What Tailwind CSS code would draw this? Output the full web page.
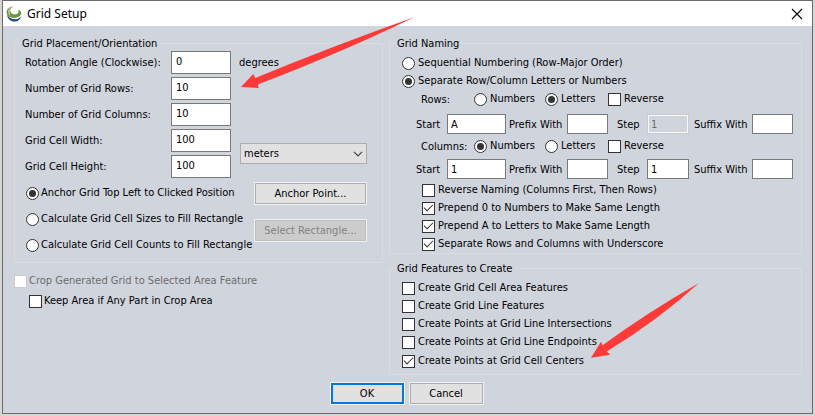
<!doctype html>
<html lang="en">
<head>
    <meta charset="UTF-8">
    <meta name="viewport" content="width=device-width, initial-scale=1.0">
    <script src="https://cdn.jsdelivr.net/npm/@tailwindcss/browser@4"></script>
    <title>Grid Setup</title>
</head>
<body class="bg-[#d6d6d2] font-['DejaVu_Sans_Condensed','DejaVu_Sans',sans-serif] text-[11px] leading-[14px] text-black">
<div class="flex flex-col min-h-screen pl-[2px] pr-[2px] pb-[2px]">
    <main class="relative grow flex flex-col border border-[#6b6b6b] bg-[#d0d4dd]">
        <header class="flex items-center justify-between h-[25px] bg-white pl-[3px] pr-[9px]">
            <div class="flex items-center gap-[5px]">
                <svg class="w-4 h-4" viewBox="0 0 16 16" aria-hidden="true">
                    <path d="M1 8.500C1.500 13 5 15.500 8.500 15.500c3.500 0 6-2 7-5.500-2 2.800-4.500 3.600-7.500 3.300C4.800 13 2.500 11 1 8.500z" fill="#17466b"/>
                    <path d="M7 .5C3 .8.500 3.500.600 6.500.800 10 4 11.900 8 11.900c3.500 0 6.500-1.500 7.200-4.100.5-2-.9-3.600-3.200-4.100 1.200 1.700.8 3.400-1.200 4.300C8 9 4.800 8 4.300 5.300 4 3.300 5.200 1.500 7 .5z" fill="#6f9440"/>
                    <path d="M7 .5C3.500 1.300 1.600 3.800 2 6.500c.4 2.100 2 3.500 4.200 4.100C4 9 3.400 7.300 3.700 5.200 4 3.300 5.200 1.500 7 .5z" fill="#b3c795"/>
                </svg>
                <h1 class="font-['Noto_Sans',sans-serif] text-[12px]">Grid Setup</h1>
            </div>
            <button type="button" aria-label="Close" class="flex">
                <svg class="w-3 h-3" viewBox="0 0 12 12" fill="none" stroke="#000" stroke-width="1.100">
                    <path d="M1 1l10 10M11 1L1 11"/>
                </svg>
            </button>
        </header>

        <div class="grid grid-cols-[369fr_413fr] gap-x-[6px] items-start pt-[10px] pl-[11px] pr-[10px]">
            <!-- left side -->
            <div class="flex flex-col">
                <fieldset class="border border-[#dcdcdc] pb-[4px]">
                    <legend class="ml-[5px] px-[2px] pt-px">Grid Placement/Orientation</legend>
                    <div class="grid grid-cols-[146px_60px_1fr] auto-rows-[23px] gap-y-[3px] items-center pl-[10px] pr-[15px]">
                        <label for="angle" class="pt-px">Rotation Angle (Clockwise):</label>
                        <input id="angle" type="text" value="0" class="h-[23px] w-full border border-[#7a7a7a] bg-white pl-1 pb-[2px]">
                        <span class="pl-2 pt-px">degrees</span>
                        <label for="grid-rows" class="pt-px">Number of Grid Rows:</label>
                        <input id="grid-rows" type="text" value="10" class="h-[23px] w-full border border-[#7a7a7a] bg-white pl-1 pb-[2px]">
                        <span></span>
                        <label for="grid-columns" class="pt-px">Number of Grid Columns:</label>
                        <input id="grid-columns" type="text" value="10" class="h-[23px] w-full border border-[#7a7a7a] bg-white pl-1 pb-[2px]">
                        <span></span>
                        <label for="cell-width" class="pt-px">Grid Cell Width:</label>
                        <input id="cell-width" type="text" value="100" class="h-[23px] w-full border border-[#7a7a7a] bg-white pl-1 pb-[2px]">
                        <div class="row-span-2 relative ml-[9px] flex items-center">
                            <select aria-label="Units" class="appearance-none h-[21px] w-full border border-[#adadad] bg-[#e1e1e1] pl-[3px]">
                                <option>meters</option>
                                <option>feet</option>
                            </select>
                            <svg class="absolute right-1 w-[10px] h-[6px] pointer-events-none" viewBox="0 0 10 6" fill="none" stroke="#444" stroke-width="1.200">
                                <path d="M1 .8l4 4 4-4"/>
                            </svg>
                        </div>
                        <label for="cell-height" class="pt-px">Grid Cell Height:</label>
                        <input id="cell-height" type="text" value="100" class="h-[23px] w-full border border-[#7a7a7a] bg-white pl-1 pb-[2px]">
                    </div>
                    <div class="flex justify-between items-start pt-[2px] pl-[11px] pr-[15px]">
                        <div class="flex flex-col">
                            <label class="flex items-center gap-[2px] h-[26px]">
                                <input type="radio" name="mode" checked class="appearance-none shrink-0 grid place-items-center size-[13px] rounded-full border border-[#333] bg-white checked:before:size-[7px] checked:before:rounded-full checked:before:bg-[#333]">
                                Anchor Grid Top Left to Clicked Position
                            </label>
                            <label class="flex items-center gap-[2px] h-[26px]">
                                <input type="radio" name="mode" class="appearance-none shrink-0 grid place-items-center size-[13px] rounded-full border border-[#333] bg-white checked:before:size-[7px] checked:before:rounded-full checked:before:bg-[#333]">
                                Calculate Grid Cell Sizes to Fill Rectangle
                            </label>
                            <label class="flex items-center gap-[2px] h-[26px]">
                                <input type="radio" name="mode" class="appearance-none shrink-0 grid place-items-center size-[13px] rounded-full border border-[#333] bg-white checked:before:size-[7px] checked:before:rounded-full checked:before:bg-[#333]">
                                Calculate Grid Cell Counts to Fill Rectangle
                            </label>
                        </div>
                        <div class="flex flex-col gap-[14px] pt-[2px]">
                            <button type="button" class="h-[23px] w-[113px] border border-[#f2f2f2] bg-[#e1e1e1] outline -outline-offset-2 outline-[#adadad]">Anchor Point...</button>
                            <button type="button" disabled class="h-[23px] w-[113px] border border-[#f2f2f2] bg-[#cccccc] text-[#838383] outline -outline-offset-2 outline-[#bfbfbf]">Select Rectangle...</button>
                        </div>
                    </div>
                </fieldset>
                <div class="flex flex-col pt-[8px]">
                    <label class="flex items-center gap-[2px] h-[20px] text-[#6d6d6d]">
                        <input type="checkbox" disabled class="appearance-none shrink-0 size-[13px] border border-[#cccccc] bg-white">
                        Crop Generated Grid to Selected Area Feature
                    </label>
                    <label class="flex items-center gap-[2px] h-[20px] pl-[15px]">
                        <input type="checkbox" class="appearance-none shrink-0 grid place-items-center size-[13px] border border-[#333] bg-white checked:before:w-[9px] checked:before:h-[5px] checked:before:mb-[3px] checked:before:border-l checked:before:border-b checked:before:border-[#333] checked:before:-rotate-45">
                        Keep Area if Any Part in Crop Area
                    </label>
                </div>
            </div>

            <!-- right side -->
            <div class="flex flex-col">
                <fieldset class="border border-[#dcdcdc]">
                    <legend class="ml-[5px] px-[2px] pt-px">Grid Naming</legend>
                    <div class="flex flex-col pt-[3px] pl-[12px] pr-[8px]">
                        <label class="flex items-center gap-[3px] h-[18px]">
                            <input type="radio" name="naming" class="appearance-none shrink-0 grid place-items-center size-[13px] rounded-full border border-[#333] bg-white checked:before:size-[7px] checked:before:rounded-full checked:before:bg-[#333]">
                            Sequential Numbering (Row-Major Order)
                        </label>
                        <label class="flex items-center gap-[3px] h-[18px]">
                            <input type="radio" name="naming" checked class="appearance-none shrink-0 grid place-items-center size-[13px] rounded-full border border-[#333] bg-white checked:before:size-[7px] checked:before:rounded-full checked:before:bg-[#333]">
                            Separate Row/Column Letters or Numbers
                        </label>
                        <div class="grid grid-cols-[53px_71px_63px_1fr] items-center h-[18px] pl-[19px]">
                            <span class="pt-px">Rows:</span>
                            <label class="flex items-center gap-[3px]">
                                <input type="radio" name="rows" class="appearance-none shrink-0 grid place-items-center size-[13px] rounded-full border border-[#333] bg-white checked:before:size-[7px] checked:before:rounded-full checked:before:bg-[#333]">
                                Numbers
                            </label>
                            <label class="flex items-center gap-[3px]">
                                <input type="radio" name="rows" checked class="appearance-none shrink-0 grid place-items-center size-[13px] rounded-full border border-[#333] bg-white checked:before:size-[7px] checked:before:rounded-full checked:before:bg-[#333]">
                                Letters
                            </label>
                            <label class="flex items-center gap-[3px]">
                                <input type="checkbox" class="appearance-none shrink-0 grid place-items-center size-[13px] border border-[#333] bg-white checked:before:w-[9px] checked:before:h-[5px] checked:before:mb-[3px] checked:before:border-l checked:before:border-b checked:before:border-[#333] checked:before:-rotate-45">
                                Reverse
                            </label>
                        </div>
                        <div class="grid grid-cols-[31px_62px_58px_50px_30px_47px_58px_41px] items-center pt-[6px] pl-[14px] whitespace-nowrap">
                            <label for="row-start" class="pt-px">Start</label>
                            <input id="row-start" type="text" value="A" class="h-[20px] w-[59px] border border-[#7a7a7a] bg-white pl-[3px]">
                            <label for="row-prefix" class="pt-px">Prefix With</label>
                            <input id="row-prefix" type="text" class="h-[20px] w-[41px] border border-[#7a7a7a] bg-white pl-[3px]">
                            <label for="row-step" class="pt-px">Step</label>
                            <input id="row-step" type="text" value="1" disabled class="h-[20px] w-[42px] border-2 border-[#f8f8f8] bg-[#d0d4dd] text-[#6d6d6d] pl-[2px] outline -outline-offset-1 outline-[#cccccc]">
                            <label for="row-suffix" class="pt-px">Suffix With</label>
                            <input id="row-suffix" type="text" class="h-[20px] w-[41px] border border-[#7a7a7a] bg-white pl-[3px]">
                        </div>
                        <div class="grid grid-cols-[53px_71px_63px_1fr] items-center h-[18px] mt-[3px] pl-[19px]">
                            <span class="pt-px">Columns:</span>
                            <label class="flex items-center gap-[3px]">
                                <input type="radio" name="columns" checked class="appearance-none shrink-0 grid place-items-center size-[13px] rounded-full border border-[#333] bg-white checked:before:size-[7px] checked:before:rounded-full checked:before:bg-[#333]">
                                Numbers
                            </label>
                            <label class="flex items-center gap-[3px]">
                                <input type="radio" name="columns" class="appearance-none shrink-0 grid place-items-center size-[13px] rounded-full border border-[#333] bg-white checked:before:size-[7px] checked:before:rounded-full checked:before:bg-[#333]">
                                Letters
                            </label>
                            <label class="flex items-center gap-[3px]">
                                <input type="checkbox" class="appearance-none shrink-0 grid place-items-center size-[13px] border border-[#333] bg-white checked:before:w-[9px] checked:before:h-[5px] checked:before:mb-[3px] checked:before:border-l checked:before:border-b checked:before:border-[#333] checked:before:-rotate-45">
                                Reverse
                            </label>
                        </div>
                        <div class="grid grid-cols-[31px_62px_58px_50px_30px_47px_58px_41px] items-center pt-[4px] pl-[14px] whitespace-nowrap">
                            <label for="column-start" class="pt-px">Start</label>
                            <input id="column-start" type="text" value="1" class="h-[20px] w-[59px] border border-[#7a7a7a] bg-white pl-[3px]">
                            <label for="column-prefix" class="pt-px">Prefix With</label>
                            <input id="column-prefix" type="text" class="h-[20px] w-[41px] border border-[#7a7a7a] bg-white pl-[3px]">
                            <label for="column-step" class="pt-px">Step</label>
                            <input id="column-step" type="text" value="1" class="h-[20px] w-[42px] border border-[#7a7a7a] bg-white pl-[3px]">
                            <label for="column-suffix" class="pt-px">Suffix With</label>
                            <input id="column-suffix" type="text" class="h-[20px] w-[41px] border border-[#7a7a7a] bg-white pl-[3px]">
                        </div>
                        <div class="flex flex-col pt-[2px] pl-[20px]">
                            <label class="flex items-center gap-[3px] h-[18px]">
                                <input type="checkbox" class="appearance-none shrink-0 grid place-items-center size-[13px] border border-[#333] bg-white checked:before:w-[9px] checked:before:h-[5px] checked:before:mb-[3px] checked:before:border-l checked:before:border-b checked:before:border-[#333] checked:before:-rotate-45">
                                Reverse Naming (Columns First, Then Rows)
                            </label>
                            <label class="flex items-center gap-[3px] h-[18px]">
                                <input type="checkbox" checked class="appearance-none shrink-0 grid place-items-center size-[13px] border border-[#333] bg-white checked:before:w-[9px] checked:before:h-[5px] checked:before:mb-[3px] checked:before:border-l checked:before:border-b checked:before:border-[#333] checked:before:-rotate-45">
                                Prepend 0 to Numbers to Make Same Length
                            </label>
                            <label class="flex items-center gap-[3px] h-[18px]">
                                <input type="checkbox" checked class="appearance-none shrink-0 grid place-items-center size-[13px] border border-[#333] bg-white checked:before:w-[9px] checked:before:h-[5px] checked:before:mb-[3px] checked:before:border-l checked:before:border-b checked:before:border-[#333] checked:before:-rotate-45">
                                Prepend A to Letters to Make Same Length
                            </label>
                            <label class="flex items-center gap-[3px] h-[18px]">
                                <input type="checkbox" checked class="appearance-none shrink-0 grid place-items-center size-[13px] border border-[#333] bg-white checked:before:w-[9px] checked:before:h-[5px] checked:before:mb-[3px] checked:before:border-l checked:before:border-b checked:before:border-[#333] checked:before:-rotate-45">
                                Separate Rows and Columns with Underscore
                            </label>
                        </div>
                    </div>
                </fieldset>
                <fieldset class="border border-[#dcdcdc] mt-[7px] pb-[3px]">
                    <legend class="ml-[5px] px-[2px] pt-px">Grid Features to Create</legend>
                    <div class="flex flex-col pt-[3px] pl-[12px]">
                        <label class="flex items-center gap-[3px] h-[18px]">
                            <input type="checkbox" class="appearance-none shrink-0 grid place-items-center size-[13px] border border-[#333] bg-white checked:before:w-[9px] checked:before:h-[5px] checked:before:mb-[3px] checked:before:border-l checked:before:border-b checked:before:border-[#333] checked:before:-rotate-45">
                            Create Grid Cell Area Features
                        </label>
                        <label class="flex items-center gap-[3px] h-[18px]">
                            <input type="checkbox" class="appearance-none shrink-0 grid place-items-center size-[13px] border border-[#333] bg-white checked:before:w-[9px] checked:before:h-[5px] checked:before:mb-[3px] checked:before:border-l checked:before:border-b checked:before:border-[#333] checked:before:-rotate-45">
                            Create Grid Line Features
                        </label>
                        <label class="flex items-center gap-[3px] h-[18px]">
                            <input type="checkbox" class="appearance-none shrink-0 grid place-items-center size-[13px] border border-[#333] bg-white checked:before:w-[9px] checked:before:h-[5px] checked:before:mb-[3px] checked:before:border-l checked:before:border-b checked:before:border-[#333] checked:before:-rotate-45">
                            Create Points at Grid Line Intersections
                        </label>
                        <label class="flex items-center gap-[3px] h-[18px]">
                            <input type="checkbox" class="appearance-none shrink-0 grid place-items-center size-[13px] border border-[#333] bg-white checked:before:w-[9px] checked:before:h-[5px] checked:before:mb-[3px] checked:before:border-l checked:before:border-b checked:before:border-[#333] checked:before:-rotate-45">
                            Create Points at Grid Line Endpoints
                        </label>
                        <label class="flex items-center gap-[3px] h-[20px]">
                            <input type="checkbox" checked class="appearance-none shrink-0 grid place-items-center size-[13px] border border-[#333] bg-white checked:before:w-[9px] checked:before:h-[5px] checked:before:mb-[3px] checked:before:border-l checked:before:border-b checked:before:border-[#333] checked:before:-rotate-45">
                            Create Points at Grid Cell Centers
                        </label>
                    </div>
                </fieldset>
            </div>
        </div>

        <footer class="flex justify-center gap-1 mt-auto pb-2 pr-[2px]">
            <button type="button" class="h-[23px] w-[75px] border border-[#f2f2f2] bg-[#e1e1e1] outline-2 -outline-offset-3 outline-[#0078d7]">OK</button>
            <button type="button" class="h-[23px] w-[75px] border border-[#f2f2f2] bg-[#e1e1e1] outline -outline-offset-2 outline-[#adadad]">Cancel</button>
        </footer>

        <!-- callout arrows -->
        <svg class="absolute left-[237px] top-[14px] w-[176px] h-[76px] pointer-events-none" viewBox="240 15 176 76" fill="#fd3a37" aria-hidden="true">
            <path d="M241 87L253.300 74l2 4Q330 47 414 17.200 345 51 257.700 84.500l1 3.500z"/>
        </svg>
        <svg class="absolute left-[587px] top-[280px] w-[111px] h-[80px] pointer-events-none" viewBox="590 281 111 80" fill="#fd3a37" aria-hidden="true">
            <path d="M591 357.700L601 341.700l1.600 3.600Q648 312 699 283 657 321 606.700 351.500l3.600 3.200z"/>
        </svg>
    </main>
</div>
</body>
</html>
